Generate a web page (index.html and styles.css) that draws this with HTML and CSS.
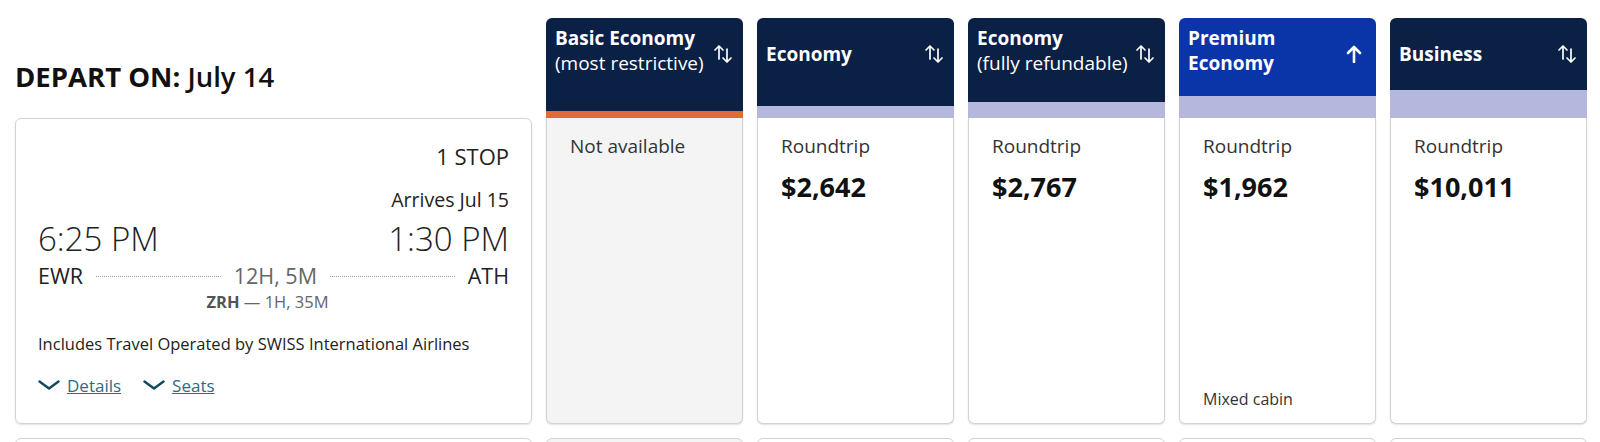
FILE: index.html
```html
<!DOCTYPE html>
<html lang="en">
<head>
  <meta charset="UTF-8">
  <meta name="viewport" content="width=device-width, initial-scale=1.0">
  <title>Select flights</title>
  <link rel="stylesheet" href="styles.css">
</head>
<body>
  <div class="results">
    <h1 class="depart-title"><strong>DEPART ON:</strong> July 14</h1>

    <div class="fare-head">
      <div class="fare-label">
        <div class="fare-label-row">
          <div class="fare-name two-line"><b>Basic Economy</b><br>(most restrictive)</div>
          <svg class="sort-icon" viewBox="0 0 22 20"><path d="M7 15V2M3 6l4-4 4 4M15 5v13M11 14l4 4 4-4"/></svg>
        </div>
      </div>
      <div class="fare-bar bar-basic"></div>
    </div>
    <div class="fare-head">
      <div class="fare-label">
        <div class="fare-label-row">
          <div class="fare-name"><b>Economy</b></div>
          <svg class="sort-icon" viewBox="0 0 22 20"><path d="M7 15V2M3 6l4-4 4 4M15 5v13M11 14l4 4 4-4"/></svg>
        </div>
      </div>
      <div class="fare-bar bar-economy"></div>
    </div>
    <div class="fare-head">
      <div class="fare-label">
        <div class="fare-label-row">
          <div class="fare-name two-line"><b>Economy</b><br>(fully refundable)</div>
          <svg class="sort-icon" viewBox="0 0 22 20"><path d="M7 15V2M3 6l4-4 4 4M15 5v13M11 14l4 4 4-4"/></svg>
        </div>
      </div>
      <div class="fare-bar bar-refundable"></div>
    </div>
    <div class="fare-head active">
      <div class="fare-label">
        <div class="fare-label-row">
          <div class="fare-name two-line"><b>Premium<br>Economy</b></div>
          <svg class="sort-up" viewBox="0 0 16 18"><path d="M8 17V2M2 8l6-6 6 6"/></svg>
        </div>
      </div>
      <div class="fare-bar bar-premium"></div>
    </div>
    <div class="fare-head">
      <div class="fare-label">
        <div class="fare-label-row">
          <div class="fare-name"><b>Business</b></div>
          <svg class="sort-icon" viewBox="0 0 22 20"><path d="M7 15V2M3 6l4-4 4 4M15 5v13M11 14l4 4 4-4"/></svg>
        </div>
      </div>
      <div class="fare-bar bar-business"></div>
    </div>

    <div class="flight-card">
      <div class="stops">1 STOP</div>
      <div class="arrives">Arrives Jul 15</div>
      <div class="times">
        <span>6:25 PM</span>
        <span>1:30 PM</span>
      </div>
      <div class="route">
        <span class="airport">EWR</span>
        <span class="dots"></span>
        <span class="duration">12H, 5M</span>
        <span class="dots"></span>
        <span class="airport">ATH</span>
      </div>
      <div class="layover"><b>ZRH</b> — 1H, 35M</div>
      <div class="operator">Includes Travel Operated by SWISS International Airlines</div>
      <div class="links">
        <a href="#" class="toggle-link"><svg viewBox="0 0 22 10"><path d="M1.5 1.5l9.5 7 9.5-7"/></svg><span>Details</span></a>
        <a href="#" class="toggle-link"><svg viewBox="0 0 22 10"><path d="M1.5 1.5l9.5 7 9.5-7"/></svg><span>Seats</span></a>
      </div>
    </div>

    <div class="fare-cell unavailable">
      <div class="fare-type">Not available</div>
    </div>
    <div class="fare-cell">
      <div class="fare-type">Roundtrip</div>
      <div class="price">$2,642</div>
    </div>
    <div class="fare-cell">
      <div class="fare-type">Roundtrip</div>
      <div class="price">$2,767</div>
    </div>
    <div class="fare-cell">
      <div class="fare-type">Roundtrip</div>
      <div class="price">$1,962</div>
      <div class="cabin-note">Mixed cabin</div>
    </div>
    <div class="fare-cell">
      <div class="fare-type">Roundtrip</div>
      <div class="price">$10,011</div>
    </div>

    <div class="flight-card next"></div>
    <div class="fare-cell next unavailable"></div>
    <div class="fare-cell next"></div>
    <div class="fare-cell next"></div>
    <div class="fare-cell next"></div>
    <div class="fare-cell next"></div>
  </div>
</body>
</html>
```

FILE: styles.css
```css
* {
  margin: 0;
  padding: 0;
  box-sizing: border-box;
}
body {
  font-family: "Open Sans", Arial, sans-serif;
  background: #fff;
  color: #333;
  overflow: hidden;
}
.results {
  display: grid;
  grid-template-columns: 517px repeat(5, 197px);
  grid-template-rows: 100px 306px 100px;
  column-gap: 14px;
  padding: 18px 0 0 15px;
}
.depart-title {
  align-self: end;
  margin-bottom: 23px;
  font-size: 27.5px;
  line-height: 36px;
  font-weight: 600;
  color: #111;
}
.depart-title strong {
  font-weight: 700;
}

/* fare column headers */
.fare-head {
  display: flex;
  flex-direction: column;
  border-radius: 6px 6px 0 0;
  overflow: hidden;
}
.fare-label {
  flex: 1;
  background: #0b2045;
  color: #fff;
  padding: 0 9px;
}
.fare-head.active .fare-label {
  background: #0a35a8;
}
.fare-label-row {
  height: 72px;
  display: flex;
  align-items: center;
  justify-content: space-between;
}
.fare-name {
  font-size: 19px;
  line-height: 25px;
}
.fare-name.two-line {
  margin-top: -7px;
}
.fare-name b {
  font-weight: 700;
}
.sort-icon {
  width: 22px;
  height: 20px;
  fill: none;
  stroke: #fff;
  stroke-width: 1.7;
  stroke-linecap: round;
  stroke-linejoin: round;
}
.sort-up {
  width: 16px;
  height: 18px;
  margin-right: 5px;
  fill: none;
  stroke: #fff;
  stroke-width: 2.6;
  stroke-linecap: round;
  stroke-linejoin: round;
}
.fare-bar {
  background: #b5b8dc;
}
.bar-basic { height: 7px; background: #e36a35; }
.bar-economy { height: 12px; }
.bar-refundable { height: 16px; }
.bar-premium { height: 22px; }
.bar-business { height: 28px; }

/* flight card */
.flight-card {
  border: 1px solid #d3d3d3;
  border-radius: 6px;
  box-shadow: 0 1px 2px rgba(0, 0, 0, 0.12);
  padding: 22px 22px 0 22px;
  color: #222;
}
.stops {
  text-align: right;
  font-size: 22px;
  line-height: 30px;
}
.arrives {
  text-align: right;
  font-size: 19.5px;
  line-height: 27px;
  margin-top: 15px;
}
.times {
  display: flex;
  justify-content: space-between;
  font-size: 33px;
  font-weight: 300;
  line-height: 38px;
  margin-top: 7px;
}
.route {
  display: flex;
  align-items: center;
  font-size: 21.5px;
  line-height: 27px;
  margin-top: 4px;
}
.dots {
  flex: 1;
  border-top: 1.5px dotted #999;
  margin: 2px 13px 0;
}
.duration {
  color: #666;
}
.layover {
  text-align: center;
  font-size: 16.5px;
  line-height: 22px;
  color: #666;
  margin-top: 2px;
  padding-right: 12px;
}
.layover b {
  color: #555;
}
.operator {
  font-size: 16.5px;
  line-height: 24px;
  margin-top: 19px;
}
.links {
  display: flex;
  gap: 22px;
  margin-top: 18px;
}
.toggle-link {
  display: flex;
  align-items: center;
  gap: 7px;
  font-size: 17px;
  line-height: 24px;
  color: #2c6b86;
}
.toggle-link svg {
  width: 22px;
  height: 10px;
  fill: none;
  stroke: #12495e;
  stroke-width: 2.4;
  stroke-linecap: round;
  stroke-linejoin: round;
  margin-top: -2px;
}

/* fare cells */
.fare-cell {
  display: flex;
  flex-direction: column;
  border: 1px solid #d3d3d3;
  border-top: none;
  border-radius: 0 0 6px 6px;
  box-shadow: 0 1px 2px rgba(0, 0, 0, 0.12);
  padding: 15px 23px 13px;
  background: #fff;
}
.fare-cell.unavailable {
  background: #f4f4f4;
}
.fare-type {
  font-size: 19px;
  line-height: 27px;
  color: #333;
}
.price {
  font-size: 27px;
  font-weight: 700;
  line-height: 34px;
  color: #111;
  margin-top: 10px;
}
.cabin-note {
  margin-top: auto;
  font-size: 16px;
  line-height: 22px;
  color: #333;
}
.next {
  margin-top: 14px;
  border-top: 1px solid #d3d3d3;
  border-radius: 6px;
}
```
